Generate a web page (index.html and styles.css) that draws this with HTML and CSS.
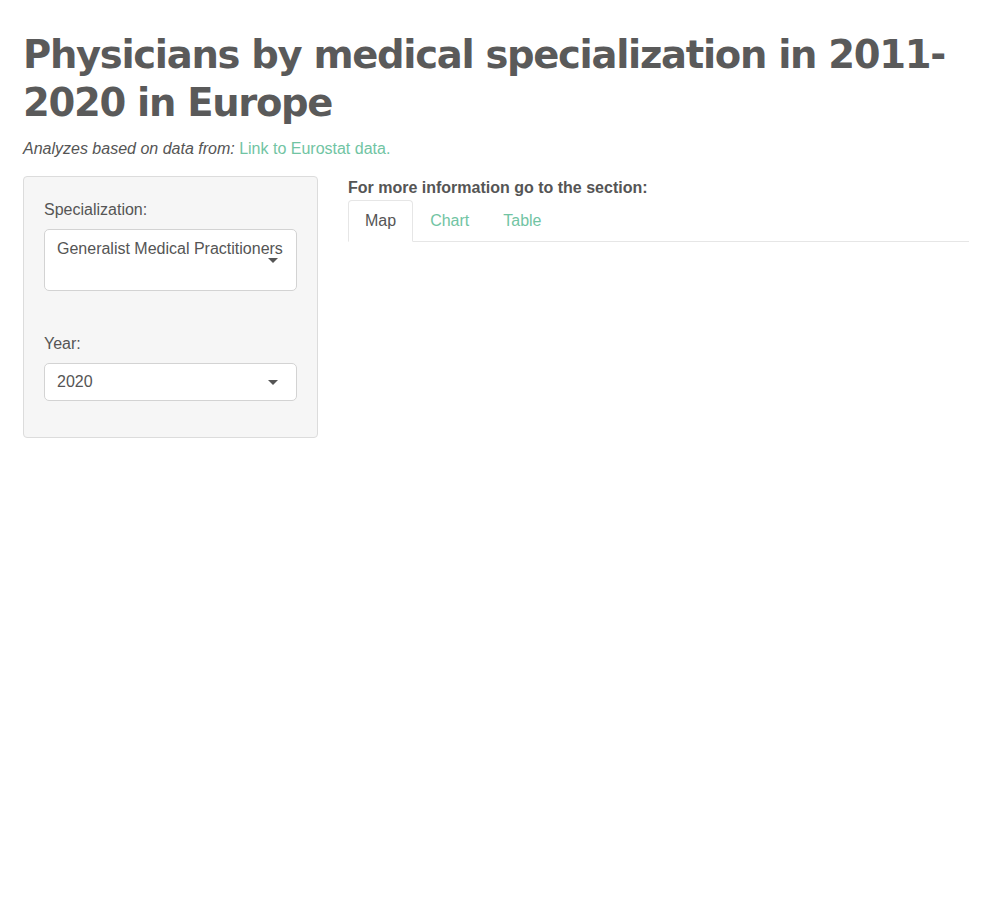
FILE: index.html
```html
<!DOCTYPE html>
<html>
<head>
<meta charset="utf-8">
<link rel="stylesheet" href="styles.css">
</head>
<body>
<div class="page">
  <h1 class="title">Physicians by medical specialization in 2011-2020 in Europe</h1>
  <p class="source"><em>Analyzes based on data from:</em> <a href="#">Link to Eurostat data.</a></p>
  <div class="row">
    <div class="sidebar">
      <div class="well">
        <div class="field">
          <label>Specialization:</label>
          <div class="select tall">
            <span>Generalist Medical Practitioners</span>
            <span class="caret tall-caret"></span>
          </div>
        </div>
        <div class="field">
          <label>Year:</label>
          <div class="select">
            <span>2020</span>
            <span class="caret"></span>
          </div>
        </div>
      </div>
    </div>
    <div class="main">
      <div class="info">For more information go to the section:</div>
      <ul class="tabs">
        <li class="tab active">Map</li>
        <li class="tab">Chart</li>
        <li class="tab">Table</li>
      </ul>
    </div>
  </div>
</div>
</body>
</html>
```
FILE: styles.css
```css
html, body {
  margin: 0;
  padding: 0;
  background: #fff;
}
body {
  font-family: "Liberation Sans", Arial, sans-serif;
  font-size: 16px;
  color: #555;
}
.page {
  padding: 0 23px;
}
.title {
  font-family: "DejaVu Sans", sans-serif;
  font-weight: bold;
  font-size: 38.5px;
  line-height: 48px;
  letter-spacing: -1.3px;
  color: #5a5a5a;
  margin: 31px -10px 0 0;
}
.source {
  margin: 12px 0 0 0;
  line-height: 20px;
}
.source a {
  color: #71c4a3;
  text-decoration: none;
}
.row {
  display: flex;
  margin-top: 17px;
  gap: 30px;
}
.sidebar {
  width: 295px;
  flex: none;
}
.well {
  background: #f6f6f6;
  border: 1px solid #dcdcdc;
  border-radius: 4px;
  padding: 23px 20px 36px 20px;
  display: flex;
  flex-direction: column;
  gap: 43px;
}
.field label {
  display: block;
  line-height: 20px;
  margin-bottom: 9px;
}
.select {
  position: relative;
  background: #fff;
  border: 1px solid #d3d3d3;
  border-radius: 5px;
  height: 38px;
  box-sizing: border-box;
  padding: 0 12px;
  display: flex;
  align-items: center;
  white-space: nowrap;
}
.select.tall {
  height: 62px;
  align-items: flex-start;
  padding-top: 10px;
}
.caret {
  position: absolute;
  right: 18px;
  top: 16px;
  width: 0;
  height: 0;
  border-left: 5px solid transparent;
  border-right: 5px solid transparent;
  border-top: 5px solid #555;
}
.tall-caret {
  top: 28px;
}
.main {
  flex: 1;
  padding-top: 3px;
}
.info {
  font-weight: bold;
  line-height: 18px;
}
.tabs {
  list-style: none;
  margin: 3px 0 0 0;
  padding: 0;
  display: flex;
  border-bottom: 1px solid #e6e6e6;
}
.tab {
  padding: 10px 16px 10px 16px;
  line-height: 20px;
  color: #71c4a3;
  border: 1px solid transparent;
  border-radius: 4px 4px 0 0;
  margin-bottom: -1px;
}
.tab.active {
  color: #555;
  border-color: #e6e6e6;
  border-bottom-color: #fff;
}
```
